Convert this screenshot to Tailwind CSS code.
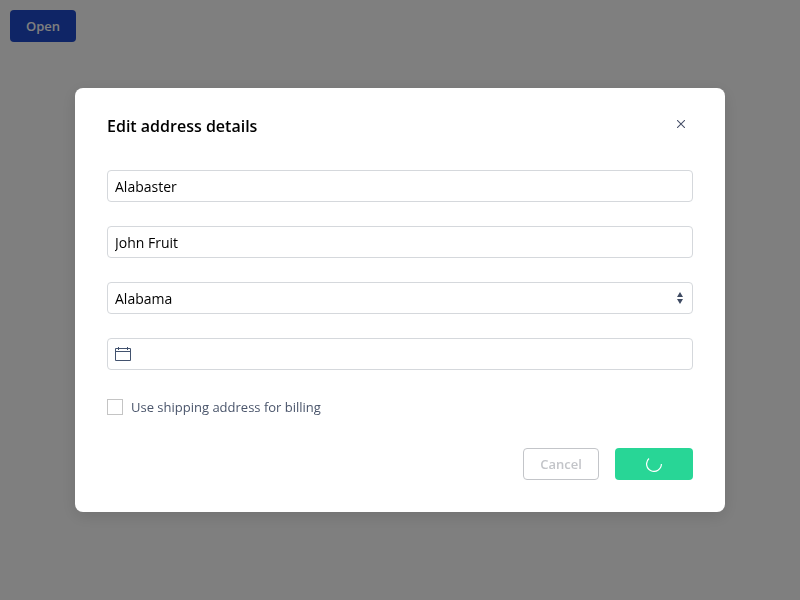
<!DOCTYPE html>
<html lang="en">
<head>
<meta charset="utf-8">
<title>Edit address details</title>
<script src="https://cdn.jsdelivr.net/npm/@tailwindcss/browser@4"></script>
</head>
<body class="h-screen overflow-hidden bg-white font-['Open_Sans',sans-serif] text-[13px] text-[#4a556b]">
<div class="p-2.5">
  <button class="block h-8 w-[66px] rounded bg-[#1e4acc] pt-0.5 text-[13px] font-semibold text-white">Open</button>
</div>
<div class="fixed inset-0 flex items-center justify-center bg-black/50">
  <section class="flex h-[424px] w-[650px] flex-col rounded-lg bg-white p-8 shadow-[0_4px_16px_rgba(0,0,0,0.12)]">
    <header class="flex h-[50px] items-start justify-between">
      <h2 class="-mt-[5px] text-base leading-[22px] font-semibold text-black">Edit address details</h2>
      <button class="flex h-2 w-6 items-start justify-center" aria-label="Close">
        <svg class="h-2 w-2" viewBox="0 0 8 8" fill="none" stroke="#475069" stroke-width="1.05"><path d="M0 0l8 8M8 0L0 8"/></svg>
      </button>
    </header>
    <div class="flex flex-col gap-6">
      <input class="h-8 rounded border border-[#d5d8dc] px-[7px] text-sm text-black" value="Alabaster">
      <input class="h-8 rounded border border-[#d5d8dc] px-[7px] text-sm text-black" value="John Fruit">
      <div class="flex h-8 items-center justify-between rounded border border-[#d5d8dc] pr-[9px] pl-[7px] text-sm text-black">
        <span class="pt-0.5">Alabama</span>
        <svg class="h-3 w-1.5" viewBox="0 0 6 12" fill="#3f4b63"><path d="M3 0L6 5H0zM3 12L0 7h6z"/></svg>
      </div>
      <div class="flex h-8 items-center rounded border border-[#d5d8dc] px-[7px]">
        <svg class="h-4 w-4" viewBox="0 0 16 16" fill="none" stroke="#42526e"><path d="M.5 2.5h15v12H.5zM0 5.5h16M3.5 1v3M12.5 1v3"/></svg>
      </div>
    </div>
    <div class="mt-[29px] flex h-4 items-center gap-2">
      <span class="h-4 w-4 border border-[#c4c4c4]"></span>
      <span class="pt-0.5">Use shipping address for billing</span>
    </div>
    <footer class="mt-[33px] flex justify-end gap-4">
      <button class="h-8 w-[76px] rounded border border-[#c3c5c9] pt-0.5 font-semibold text-[#c3c5c9]">Cancel</button>
      <button class="flex h-8 w-[78px] items-center justify-center rounded bg-[#28d696]" aria-label="Saving">
        <svg class="h-4 w-4" viewBox="0 0 16 16" fill="none" stroke="white" stroke-width="1.2"><path d="M3 2.5A7.4 7.4 0 1 0 15.4 8"/></svg>
      </button>
    </footer>
  </section>
</div>
</body>
</html>
